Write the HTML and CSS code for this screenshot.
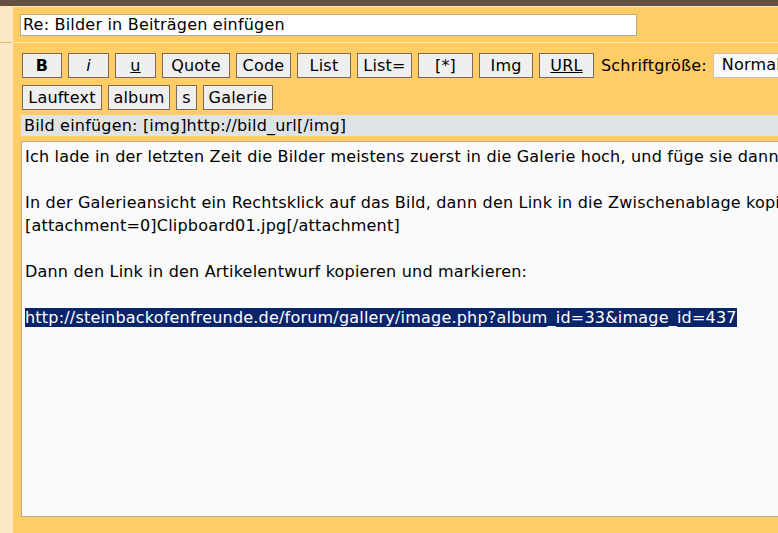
FILE: index.html
```html
<!DOCTYPE html>
<html lang="de">
<head>
    <meta charset="UTF-8">
    <title>Re: Bilder in Beiträgen einfügen</title>
    <link rel="stylesheet" href="styles.css">
</head>
<body>
    <div class="topbar"></div>

    <div class="post-form">
        <div class="side">
            <div class="side-top"></div>
        </div>

        <div class="main">
            <div class="subject-row">
                <input class="subject" type="text" value="Re: Bilder in Beiträgen einfügen">
            </div>

            <div class="editor-row">
                <div class="toolbar">
                    <button class="bb w-b"><b>B</b></button>
                    <button class="bb w-i"><i>i</i></button>
                    <button class="bb w-i"><u>u</u></button>
                    <button class="bb w-quote">Quote</button>
                    <button class="bb w-code">Code</button>
                    <button class="bb w-list">List</button>
                    <button class="bb w-code">List=</button>
                    <button class="bb w-code">[*]</button>
                    <button class="bb w-list">Img</button>
                    <button class="bb w-code"><u>URL</u></button>
                    <span class="size-label">Schriftgröße:</span>
                    <div class="size-select">Normal</div>
                </div>

                <div class="toolbar">
                    <button class="bb w-lauf">Lauftext</button>
                    <button class="bb w-album">album</button>
                    <button class="bb w-s">s</button>
                    <button class="bb w-gal">Galerie</button>
                </div>

                <div class="helpline">Bild einfügen: [img]http://bild_url[/img]</div>

                <div class="message">Ich lade in der letzten Zeit die Bilder meistens zuerst in die Galerie hoch, und füge sie dann

In der Galerieansicht ein Rechtsklick auf das Bild, dann den Link in die Zwischenablage kopieren.
[attachment=0]Clipboard01.jpg[/attachment]

Dann den Link in den Artikelentwurf kopieren und markieren:

<span class="selected">http://steinbackofenfreunde.de/forum/gallery/image.php?album_id=33&amp;image_id=437</span>
</div>
            </div>
        </div>
    </div>
</body>
</html>
```

FILE: styles.css
```css
body {
    margin: 0;
    background: #ffcc66;
    font-family: 'DejaVu Sans', Verdana, sans-serif;
    font-size: 16px;
    letter-spacing: 0.2px;
    color: #000;
    overflow: hidden;
    height: 533px;
}

.topbar {
    height: 6px;
    background: #625140;
    border-bottom: 1px solid #fde7bd;
}

.post-form {
    display: flex;
    height: 526px;
}

.side {
    width: 12px;
    flex-shrink: 0;
    background: #fbe9c6;
    border-right: 1px solid #fdebc5;
}

.side-top {
    height: 35px;
    border-bottom: 1px solid #e2b56f;
}

.main {
    flex: 1;
    min-width: 0;
    overflow: hidden;
}

.subject-row {
    height: 35px;
    padding-left: 7px;
    display: flex;
    align-items: center;
    border-bottom: 1px solid #fde6b5;
}

.subject {
    width: 617px;
    height: 22px;
    box-sizing: border-box;
    margin: 0;
    padding: 0 2px;
    border: 1px solid #b3aa93;
    background: #fff;
    font-family: inherit;
    font-size: 16px;
    letter-spacing: 0.2px;
    color: #000;
}

.editor-row {
    padding: 10px 0 0 8px;
}

.toolbar {
    display: flex;
    align-items: center;
    gap: 6px;
    margin-left: 1px;
    margin-bottom: 7px;
    white-space: nowrap;
}

.bb {
    height: 25px;
    box-sizing: border-box;
    margin: 0;
    padding: 0;
    flex-shrink: 0;
    border: 1px solid #7a6a56;
    background: #efefef;
    font-family: inherit;
    font-size: 16px;
    letter-spacing: 0.2px;
    color: #000;
    line-height: 21px;
}

.bb i {
    font-style: italic;
}

.w-b { width: 40px; }
.w-i { width: 41px; }
.w-quote { width: 68px; }
.w-code { width: 55px; }
.w-list { width: 54px; }
.w-lauf { width: 80px; }
.w-album { width: 62px; }
.w-s { width: 21px; }
.w-gal { width: 70px; }

.size-label {
    margin-left: 1px;
}

.size-select {
    height: 25px;
    box-sizing: border-box;
    width: 100px;
    flex-shrink: 0;
    padding: 1px 0 0 8px;
    border: 1px solid #c9c2ad;
    background: #fafafa;
}

.helpline {
    margin-top: -2px;
    height: 21px;
    line-height: 21px;
    padding-left: 3px;
    background: #dfe3e6;
    width: 800px;
}

.message {
    margin-top: 5px;
    width: 800px;
    height: 376px;
    box-sizing: border-box;
    padding: 3px 3px;
    border: 1px solid #b7ad95;
    background: #fafafa;
    white-space: pre;
    line-height: 23px;
    overflow: hidden;
}

.selected {
    background: #0a246a;
    color: #fff;
}
```
